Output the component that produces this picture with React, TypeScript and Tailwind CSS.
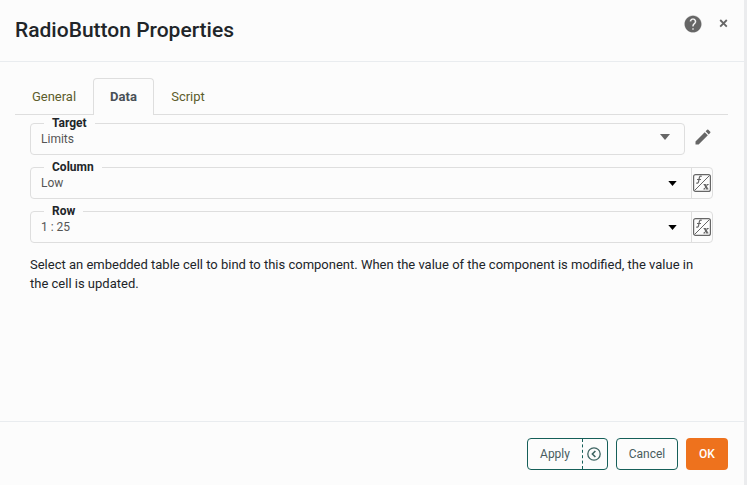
import type { ReactNode } from "react";

function HelpIcon() {
  return (
    <svg width="20" height="20" viewBox="0 0 24 24" fill="#666666">
      <path d="M12 2C6.48 2 2 6.48 2 12s4.48 10 10 10 10-4.48 10-10S17.52 2 12 2zm1 17h-2v-2h2v2zm2.07-7.75-.9.92C13.45 12.9 13 13.5 13 15h-2v-.5c0-1.1.45-2.1 1.17-2.83l1.24-1.26c.37-.36.59-.86.59-1.41 0-1.1-.9-2-2-2s-2 .9-2 2H8c0-2.21 1.79-4 4-4s4 1.79 4 4c0 .88-.36 1.68-.93 2.25z" stroke="#666666" strokeWidth="0.3" />
    </svg>
  );
}

function PencilIcon() {
  return (
    <svg width="20" height="20" viewBox="0 0 24 24" fill="#666666">
      <path d="M3 17.25V21h3.75L17.81 9.94l-3.75-3.75L3 17.25zM20.71 7.04a1 1 0 0 0 0-1.41l-2.34-2.34a1 1 0 0 0-1.41 0l-1.83 1.83 3.75 3.75 1.83-1.83z" />
    </svg>
  );
}

function FormulaIcon() {
  return (
    <svg width="18" height="18" viewBox="0 0 18 18" fill="none" stroke="#666666">
      <rect x="0.6" y="0.6" width="16.8" height="16.8" rx="2" strokeWidth="1.2" />
      <path d="M1.5 16.5L16.5 1.5" />
      <path d="M8.7 2.4C7.4 1.8 6.6 2.4 6.3 3.8L5.5 7.8C5.2 9.1 4.6 9.4 3.2 9M4 5.5h4" strokeWidth="1.2" />
      <path d="M11.8 10.5L14.3 15" strokeWidth="1.8" />
      <path d="M14.8 10.5L11.2 15M10.6 10.5h2M13.6 10.5h2M10.4 15h2M13.4 15h2" strokeWidth="1" />
    </svg>
  );
}

function Caret({ large = false }: { large?: boolean }) {
  return large ? (
    <svg width="10" height="6" viewBox="0 0 10 6" fill="#666666"><path d="M0 0h10L5 6z" /></svg>
  ) : (
    <svg width="9" height="5" viewBox="0 0 9 5" fill="#000000"><path d="M0.3 0h8.4L4.5 5z" /></svg>
  );
}

function Field({ label, value, children }: { label: string; value: string; children: ReactNode }) {
  return (
    <div className="relative flex h-8 grow rounded border border-[#dedede]">
      <span className="absolute -top-2 left-[13px] bg-[#fcfcfc] px-2 text-[12px] leading-[15px] font-bold text-[#212529]">
        {label}
      </span>
      <span className="grow pl-[10px] pt-[7px] text-[12px] leading-4 text-[#555555]">{value}</span>
      {children}
    </div>
  );
}

function FormulaField({ label, value }: { label: string; value: string }) {
  return (
    <div className="mr-4 flex">
      <Field label={label} value={value}>
        <span className="flex w-[23px] items-start pt-[13px]"><Caret /></span>
        <span className="flex w-[21px] items-center border-l border-[#dedede] pl-px"><FormulaIcon /></span>
      </Field>
    </div>
  );
}

export default function App() {
  return (
    <div className="h-[485px] w-[747px] bg-[#ebecee] font-['Roboto','Liberation_Sans',sans-serif]">
      <div className="flex h-full w-[744px] flex-col bg-[#fcfcfc]">
        <header className="flex h-[62px] shrink-0 items-start border-b border-[#e9ecef] pl-[15px]">
          <h1 className="grow pt-[15px] text-[21px] leading-[30px] font-medium text-[#212529]">RadioButton Properties</h1>
          <button className="mt-[14px]"><HelpIcon /></button>
          <button className="mt-[18px] mr-4 ml-4">
            <svg width="9" height="10" viewBox="0 0 9 10" stroke="#666666" strokeWidth="1.8" fill="none"><path d="M1.2 2L7.8 8.6M7.8 2L1.2 8.6" /></svg>
          </button>
        </header>

        <main className="grow px-[15px] pt-4">
          <nav className="mr-px flex h-[37px] border-b border-[#dedede] text-[13px] leading-[20px] text-[#5d5d2c]">
            <button className="w-[78px] pt-px">General</button>
            <button className="-mb-px h-[37px] w-[61px] rounded-t border border-b-0 border-[#dedede] bg-[#fcfcfc] font-bold text-[#495057]">Data</button>
            <button className="w-[68px] pt-px">Script</button>
          </nav>
          <section className="flex flex-col gap-3 pt-2 pl-[15px]">
            <div className="flex">
              <Field label="Target" value="Limits">
                <span className="flex w-6 items-start pt-[10px]"><Caret large /></span>
              </Field>
              <button className="mr-4 ml-2 h-7 w-5"><PencilIcon /></button>
            </div>
            <FormulaField label="Column" value="Low" />
            <FormulaField label="Row" value="1 : 25" />
            <p className="w-[684px] text-[13px] leading-[19px] text-[#212529]">
              Select an embedded table cell to bind to this component. When the value of the component is modified, the value in the cell is updated.
            </p>
          </section>
        </main>

        <footer className="flex h-16 shrink-0 items-start justify-end gap-2 border-t border-[#e9ecef] pt-4 pr-4 text-[12px] text-[#495c5e]">
          <div className="flex h-8 w-[81px] rounded border border-[#155f59]">
            <button className="grow">Apply</button>
            <button className="flex w-[25px] items-center border-l border-dashed border-[#155f59] pl-1">
              <svg width="14" height="14" viewBox="0 0 14 14" fill="none" stroke="#3d6462" strokeWidth="1.3"><circle cx="7" cy="7" r="6.2" /><path d="M8.4 4L5.4 7l3 3" strokeWidth="1.6" /></svg>
            </button>
          </div>
          <button className="h-8 w-[62px] rounded border border-[#155f59]">Cancel</button>
          <button className="h-8 w-[42px] rounded bg-[#ee721d] font-medium text-white">OK</button>
        </footer>
      </div>
    </div>
  );
}
